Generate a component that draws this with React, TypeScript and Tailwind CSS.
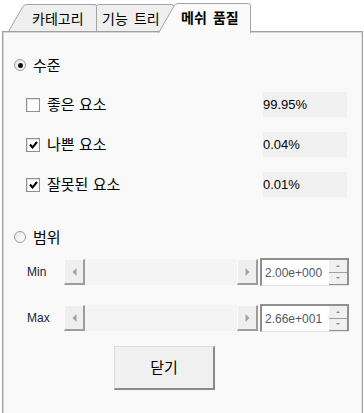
import React from "react";

const ko = { fontFamily: '"Noto Sans CJK KR", "Noto Sans", sans-serif', wordSpacing: "3px" };
const koBody = { fontFamily: '"Noto Sans CJK KR", "Noto Sans", sans-serif', wordSpacing: "1px" };
const lat = { fontFamily: '"Liberation Sans", Arial, sans-serif' };

function Tab({ w, h, path, fill, label, pl, pt, bold, z }: { w: number; h: number; path: string; fill: string; label: string; pl: string; pt: string; bold?: boolean; z: string }) {
    return (
        <div className={`relative shrink-0 ${z}`} style={{ width: w, height: h }}>
            <svg className="absolute inset-0" width={w} height={h} viewBox={`0 0 ${w} ${h}`}>
                <path d={path} fill={fill} stroke="#a3a3a3" strokeWidth="1" />
            </svg>
            <div className={`relative ${pl} ${pt} text-[14px] leading-[18px] text-black whitespace-nowrap overflow-hidden ${bold ? "font-bold" : ""}`} style={ko}>
                {label}
            </div>
        </div>
    );
}

function Radio({ checked }: { checked?: boolean }) {
    return (
        <div className="w-[12px] h-[12px] rounded-full border border-[#9a9a9a] bg-gradient-to-br from-[#e6e6e6] to-white flex items-center justify-center">
            {checked && <div className="w-[5px] h-[5px] rounded-full bg-[#111]" />}
        </div>
    );
}

function Check({ checked }: { checked?: boolean }) {
    return (
        <div className="w-[14px] h-[14px] border border-[#8e8f8f] bg-white flex items-center justify-center shadow-[inset_1px_1px_0_#e2e2e2]">
            {checked && (
                <svg width="9" height="8" viewBox="0 0 9 8">
                    <path d="M1 3.5 L3.5 6.5 L8 1" fill="none" stroke="#000" strokeWidth="2" />
                </svg>
            )}
        </div>
    );
}

function CheckRow({ checked, label, value, mt }: { checked?: boolean; label: string; value: string; mt: string }) {
    return (
        <div className={`flex items-center h-[25px] ${mt}`}>
            <div className="ml-[23px]"><Check checked={checked} /></div>
            <span className="ml-[7px] text-[15px] text-black" style={koBody}>{label}</span>
            <div className="ml-auto mr-[15px] w-[84px] h-[25px] bg-[#f0f0f0] flex items-center text-[13px] text-black" style={lat}>
                {value}
            </div>
        </div>
    );
}

function ScrollBtn({ dir }: { dir: "l" | "r" }) {
    return (
        <div className="w-[21px] h-[26px] bg-[#efefef] border-t border-l border-t-[#fbfbfb] border-l-[#fbfbfb] border-r-2 border-b-2 border-r-[#9d9d9d] border-b-[#9d9d9d] flex items-center justify-center">
            <svg width="5" height="8" viewBox="0 0 5 8">
                <path d={dir === "l" ? "M4.5 0 L0.5 4 L4.5 8 Z" : "M0.5 0 L4.5 4 L0.5 8 Z"} fill="#a2a2a2" />
            </svg>
        </div>
    );
}

function RangeRow({ label, value, mt }: { label: string; value: string; mt: string }) {
    return (
        <div className={`flex items-center h-[28px] ${mt}`}>
            <span className="ml-[24px] w-[37px] text-[12px] text-[#1a1a3a]" style={lat}>{label}</span>
            <ScrollBtn dir="l" />
            <div className="w-[152px] h-[26px] bg-[#f4f4f4]" />
            <ScrollBtn dir="r" />
            <div className="ml-[2px] flex h-[28px] border-t-2 border-l-2 border-[#8f8f8f] border-b border-b-[#e4e4e4]">
                <div className="w-[67px] bg-white flex items-center pl-[3px] text-[12px] text-[#4f5866]" style={lat}>{value}</div>
                <div className="w-[20px] flex flex-col border-r-2 border-[#8f8f8f]">
                    <div className="flex-1 bg-[#f0f0f0] border-b border-[#a0a0a0] flex items-center justify-center">
                        <div className="w-0 h-0 border-l-[2px] border-r-[2px] border-b-[2px] border-l-transparent border-r-transparent border-b-[#888]" />
                    </div>
                    <div className="flex-1 bg-[#f0f0f0] border-b border-[#8f8f8f] flex items-center justify-center">
                        <div className="w-0 h-0 border-l-[2px] border-r-[2px] border-t-[2px] border-l-transparent border-r-transparent border-t-[#888]" />
                    </div>
                </div>
            </div>
        </div>
    );
}

export default function App() {
    return (
        <div className="w-[364px] h-[413px] bg-white overflow-hidden flex flex-col">
            <div className="flex items-end h-[33px] pl-[7px] shrink-0">
                <Tab w={90} h={29} z="z-0" fill="#efefef" label="카테고리" pl="pl-[25px]" pt="pt-[5px]"
                    path="M0.5 29 L16 2.5 Q17.5 0.5 20 0.5 L87.5 0.5 Q89.5 0.5 89.5 2.5 L89.5 29" />
                <div className="-ml-[1px]">
                    <Tab w={78} h={29} z="z-0" fill="#efefef" label="기능 트리" pl="pl-[6px]" pt="pt-[5px]"
                        path="M0.5 29 L0.5 2.5 Q0.5 0.5 2.5 0.5 L75.5 0.5 Q77.5 0.5 77.5 2.5 L77.5 29" />
                </div>
                <div className="-ml-[16px]">
                    <Tab w={93} h={30} z="z-[2]" fill="#fafafa" label="메쉬 품질" pl="pl-[23px]" pt="pt-[5px]" bold
                        path="M0.5 30 L16 3 Q17.5 0.5 20 0.5 L90.5 0.5 Q92.5 0.5 92.5 2.5 L92.5 30" />
                </div>
            </div>
            <div className="relative z-[1] -mt-[2px] ml-[2px] mr-[1px] h-[400px] shrink-0 border border-[#a0a0a0] bg-[#f9f9f9] shadow-[inset_1px_1px_0_#d6d6d6,inset_-1px_0_0_#e8e8e8] flex flex-col">
                <div className="flex items-center h-[16px] mt-[25px]">
                    <div className="ml-[11px]"><Radio checked /></div>
                    <span className="ml-[7px] text-[15px] text-black" style={koBody}>수준</span>
                </div>
                <CheckRow label="좋은 요소" value="99.95%" mt="mt-[19px]" />
                <CheckRow checked label="나쁜 요소" value="0.04%" mt="mt-[15px]" />
                <CheckRow checked label="잘못된 요소" value="0.01%" mt="mt-[15px]" />
                <div className="flex items-center h-[16px] mt-[32px]">
                    <div className="ml-[11px]"><Radio /></div>
                    <span className="ml-[7px] text-[15px] text-black" style={koBody}>범위</span>
                </div>
                <RangeRow label="Min" value="2.00e+000" mt="mt-[13px]" />
                <RangeRow label="Max" value="2.66e+001" mt="mt-[18px]" />
                <button className="mt-[14px] ml-[111px] w-[101px] h-[44px] bg-[#f0f0f0] border-t border-l border-[#dcdcdc] border-r-2 border-b-2 border-r-[#8a8a8a] border-b-[#8a8a8a] text-[15px] text-black" style={koBody}>
                    닫기
                </button>
            </div>
        </div>
    );
}
